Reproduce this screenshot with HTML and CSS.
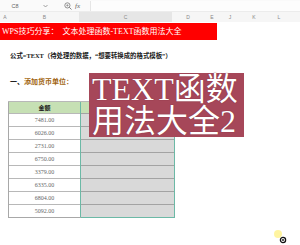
FILE: index.html
```html
<!DOCTYPE html>
<html lang="zh-CN">
<head>
    <meta charset="UTF-8">
    <meta name="viewport" content="width=device-width, initial-scale=1.0">
    <title>TEXT函数用法大全2</title>
    <link rel="stylesheet" href="styles.css">
</head>
<body>
    <div class="sheet">
        <div class="formula-bar">
            <div class="name-box">C8</div>
            <div class="name-arrow">
                <svg width="5" height="4" viewBox="0 0 5 4"><path d="M0.5 1 L2.5 3 L4.5 1" fill="none" stroke="#888" stroke-width="0.8"/></svg>
            </div>
            <svg class="zoom-icon" width="8" height="8" viewBox="0 0 8 8">
                <circle cx="3.4" cy="3.4" r="2.6" fill="none" stroke="#777" stroke-width="0.8"/>
                <path d="M5.3 5.3 L7.5 7.5" stroke="#777" stroke-width="0.9"/>
                <path d="M2.2 3.4 H4.6 M3.4 2.2 V4.6" stroke="#777" stroke-width="0.6"/>
            </svg>
            <div class="fx">fx</div>
            <div class="formula-input"></div>
        </div>

        <div class="col-heads">
            <div class="col col-a">A</div>
            <div class="col col-b">B</div>
            <div class="col col-c">C</div>
            <div class="col col-d">D</div>
            <div class="col col-e">E</div>
            <div class="col col-j">J</div>
            <div class="col col-k">K</div>
            <div class="col col-l">L</div>
        </div>

        <div class="title-bar">WPS技巧分享：&nbsp;&nbsp;文本处理函数-TEXT函数用法大全</div>

        <p class="formula">公式=TEXT（待处理的数据，“想要转换成的格式模板”）</p>
        <p class="section">一、<span class="section-name">添加货币单位：</span></p>

        <table class="amounts">
            <tr class="head"><th>金额</th><th class="result"></th></tr>
            <tr><td>7481.00</td><td class="result"></td></tr>
            <tr><td>6026.00</td><td class="result"></td></tr>
            <tr><td>2731.00</td><td class="result"></td></tr>
            <tr><td>6750.00</td><td class="result"></td></tr>
            <tr><td>3379.00</td><td class="result"></td></tr>
            <tr><td>6335.00</td><td class="result"></td></tr>
            <tr><td>6804.00</td><td class="result"></td></tr>
            <tr><td>5092.00</td><td class="result"></td></tr>
        </table>

        <!-- 视频封面文字 -->
        <div class="cover">
            <div class="cover-line">TEXT函数</div>
            <div class="cover-line">用法大全2</div>
        </div>

        <div class="pointer">
            <span class="pointer-glow"></span>
            <svg class="pointer-icon" width="8" height="8" viewBox="0 0 8 8">
                <circle cx="4" cy="4" r="2.6" fill="#fff" stroke="#111" stroke-width="1.3"/>
                <circle cx="4" cy="4" r="0.9" fill="#111"/>
            </svg>
        </div>
    </div>
</body>
</html>
```

FILE: styles.css
```css
body {
    margin: 0;
    background-color: #fff;
    font-family: "Liberation Serif", "Noto Sans CJK SC", serif;
}

.sheet {
    position: relative;
    width: 300px;
    height: 245px;
    overflow: hidden;
    background-color: #fff;
}

/* barra de fórmulas */
.formula-bar {
    display: flex;
    align-items: center;
    height: 12px;
    background-color: #fafafa;
    border-bottom: 1px solid #ececec;
    box-sizing: border-box;
}

.name-box {
    width: 30px;
    text-align: center;
    font-family: "Liberation Sans", "Noto Sans CJK SC", sans-serif;
    font-size: 5.5px;
    color: #666;
}

.name-arrow {
    width: 30px;
    display: flex;
    justify-content: center;
}

.zoom-icon {
    margin-left: 4px;
}

.fx {
    margin-left: 3px;
    width: 10px;
    font-family: "Liberation Serif", serif;
    font-style: italic;
    font-size: 7px;
    color: #666;
}

.formula-input {
    flex: 1;
    height: 10px;
    margin-left: 5px;
    background-color: #fdfdfd;
    border-left: 1px solid #e6e6e6;
}

/* encabezado de columnas */
.col-heads {
    display: flex;
    height: 10px;
    background-color: #f6f6f6;
    border-bottom: 1px solid #fff;
}

.col {
    display: flex;
    align-items: center;
    justify-content: center;
    font-family: "Liberation Sans", sans-serif;
    font-size: 5px;
    color: #888;
}

.col-a { width: 10px; }
.col-b { width: 69px; }
.col-c { width: 93px; background-color: #e6e6e6; }
.col-d { width: 32px; }
.col-e { width: 16px; }
.col-j { width: 20px; }
.col-k { width: 28px; }
.col-l { width: 22px; }

.title-bar {
    width: 217px;
    height: 17px;
    line-height: 17px;
    padding-left: 2px;
    box-sizing: border-box;
    background-color: #ff0000;
    color: #fff;
    font-size: 8px;
    white-space: nowrap;
}

.formula {
    margin: 12px 0 0 10px;
    font-size: 6.4px;
    line-height: 8px;
    font-weight: bold;
    color: #1a1a1a;
    white-space: nowrap;
}

.section {
    margin: 18px 0 0 10px;
    font-size: 7px;
    line-height: 9px;
    font-weight: bold;
    color: #1a1a1a;
}

.section-name {
    color: #a0620c;
}

/* tabla de montos */
.amounts {
    margin: 14px 0 0 8px;
    border-collapse: collapse;
    table-layout: fixed;
}

.amounts th,
.amounts td {
    padding: 0;
    height: 12px;
    text-align: center;
    border-top: 1px solid #b8b8b8;
    border-left: 1px solid #a8a8a8;
}

.amounts th {
    width: 71px;
    height: 11px;
    background-color: #c6e0b4;
    font-size: 6px;
    font-weight: bold;
    color: #222;
}

.amounts td {
    font-size: 6px;
    color: #666;
    background-color: #fff;
}

.amounts tr:last-child td {
    border-bottom: 1px solid #a8a8a8;
}

.amounts .result {
    width: 93px;
    background-color: #d9d9d9;
    border-top: 1px solid #a3a3a3;
    border-left: 1px solid #6cb9a6;
    border-right: 1px solid #6cb9a6;
}

.amounts .head .result {
    background-color: #c6e0b4;
    border-top: 1px solid #b8b8b8;
}

.amounts tr:last-child .result {
    border-bottom: 1px solid #6cb9a6;
}

/* cuadro superpuesto */
.cover {
    position: absolute;
    left: 89px;
    top: 73px;
    width: 155px;
    height: 64px;
    padding-left: 3px;
    box-sizing: border-box;
    background-color: #a64759;
    color: #fff;
    font-family: "Liberation Serif", "Noto Sans CJK SC", serif;
    font-size: 32px;
    white-space: nowrap;
    text-shadow: 0 0 1px #6e2333;
}

.cover-line {
    height: 32px;
    line-height: 32px;
}

.pointer {
    position: absolute;
    left: 273px;
    top: 229px;
    width: 16px;
    height: 16px;
}

.pointer-glow {
    position: absolute;
    left: 1px;
    top: 1px;
    width: 8px;
    height: 8px;
    border-radius: 50%;
    background-color: rgba(255, 240, 120, 0.7);
}

.pointer-icon {
    position: absolute;
    left: 6px;
    top: 7px;
}
```
